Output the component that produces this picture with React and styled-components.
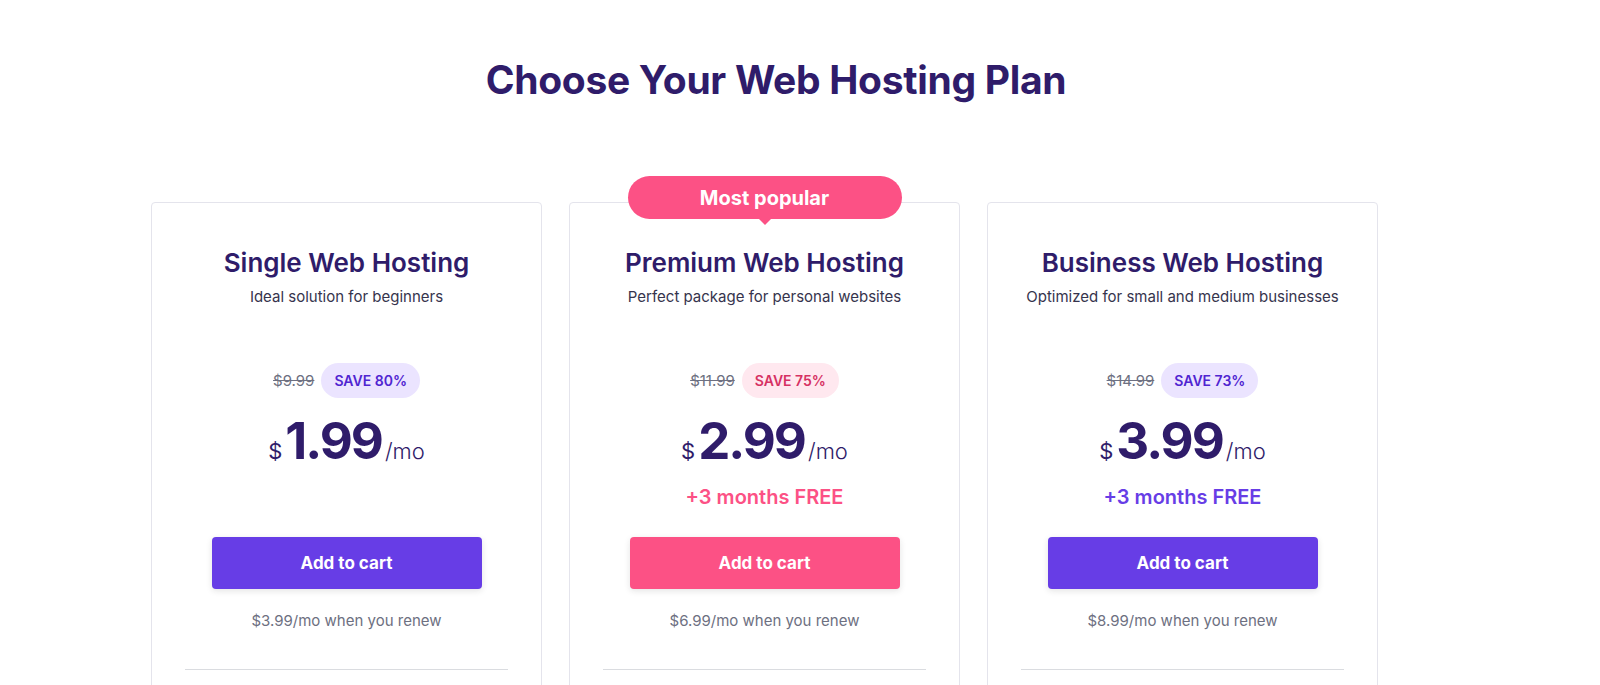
import React from "react";
import styled, { createGlobalStyle } from "styled-components";

const GlobalStyle = createGlobalStyle`
  html, body {
    margin: 0;
    padding: 0;
    background: #ffffff;
    font-family: "Inter", "Noto Sans", sans-serif;
    color: #2f1c6a;
  }
  body {
    height: 685px;
    overflow: hidden;
  }
`;

const plans = [
  {
    name: "Single Web Hosting",
    desc: "Ideal solution for beginners",
    old: "$9.99",
    save: "SAVE 80%",
    price: "1.99",
    renew: "$3.99/mo when you renew",
    accent: "purple",
  },
  {
    name: "Premium Web Hosting",
    desc: "Perfect package for personal websites",
    old: "$11.99",
    save: "SAVE 75%",
    price: "2.99",
    free: "+3 months FREE",
    renew: "$6.99/mo when you renew",
    accent: "pink",
    popular: true,
  },
  {
    name: "Business Web Hosting",
    desc: "Optimized for small and medium businesses",
    old: "$14.99",
    save: "SAVE 73%",
    price: "3.99",
    free: "+3 months FREE",
    renew: "$8.99/mo when you renew",
    accent: "purple",
  },
];

const colors = {
  purple: { main: "#673de6", soft: "#ebe4ff", text: "#5025d1" },
  pink: { main: "#fc5185", soft: "#ffe8ef", text: "#d63163" },
};

const App = () => {
  return (
    <>
      <GlobalStyle />
      <Wrapper>
        <Heading>Choose Your Web Hosting Plan</Heading>
        <Cards>
          {plans.map((p) => (
            <Card key={p.name}>
              {p.popular && <Ribbon>Most popular</Ribbon>}
              <PlanName>{p.name}</PlanName>
              <PlanDesc>{p.desc}</PlanDesc>
              <SaveRow>
                <OldPrice>{p.old}</OldPrice>
                <SaveBadge $accent={p.accent}>{p.save}</SaveBadge>
              </SaveRow>
              <PriceRow>
                <Currency>$</Currency>
                <Amount>{p.price}</Amount>
                <Period>/mo</Period>
              </PriceRow>
              <Free $accent={p.accent}>{p.free || ""}</Free>
              <CartButton $accent={p.accent}>Add to cart</CartButton>
              <Renew>{p.renew}</Renew>
              <Divider />
            </Card>
          ))}
        </Cards>
      </Wrapper>
    </>
  );
};

const Wrapper = styled.div`
  width: 1250px;
  margin-left: 151px;
  display: flex;
  flex-direction: column;
`;

const Heading = styled.h1`
  margin: 54px 0 0;
  text-align: center;
  font-size: 39px;
  line-height: 51px;
  font-weight: 700;
  letter-spacing: -0.3px;
  color: #2f1c6a;
`;

const Cards = styled.div`
  margin-top: 97px;
  display: grid;
  grid-template-columns: repeat(3, 391px);
  gap: 27px;
`;

const Card = styled.div`
  position: relative;
  box-sizing: border-box;
  height: 520px;
  border: 1px solid #e4e4ec;
  border-radius: 4px;
  display: flex;
  flex-direction: column;
  align-items: center;
  padding: 42px 33px 0;
`;

const Ribbon = styled.div`
  position: absolute;
  top: -27px;
  left: 50%;
  transform: translateX(-50%);
  width: 274px;
  height: 43px;
  border-radius: 22px;
  background: #fc5185;
  color: #ffffff;
  font-size: 20px;
  font-weight: 700;
  display: flex;
  align-items: center;
  justify-content: center;
  &::after {
    content: "";
    position: absolute;
    bottom: -6px;
    left: 50%;
    transform: translateX(-50%);
    border-left: 6px solid transparent;
    border-right: 6px solid transparent;
    border-top: 6px solid #fc5185;
  }
`;

const PlanName = styled.h2`
  margin: 0;
  font-size: 26px;
  line-height: 36px;
  font-weight: 600;
  color: #2f1c6a;
`;

const PlanDesc = styled.p`
  margin: 4px 0 0;
  font-size: 15px;
  line-height: 24px;
  color: #36344d;
`;

const SaveRow = styled.div`
  margin-top: 54px;
  display: flex;
  align-items: center;
  gap: 7px;
`;

const OldPrice = styled.span`
  font-size: 15px;
  color: #6d7081;
  text-decoration: line-through;
`;

const SaveBadge = styled.span`
  height: 35px;
  padding: 0 13px;
  border-radius: 18px;
  display: flex;
  align-items: center;
  font-size: 14px;
  font-weight: 600;
  background: ${(p) => colors[p.$accent].soft};
  color: ${(p) => colors[p.$accent].text};
`;

const PriceRow = styled.div`
  margin-top: 13px;
  display: flex;
  align-items: baseline;
  height: 60px;
`;

const Currency = styled.span`
  font-size: 22px;
  color: #2f1c6a;
  margin-right: 3px;
`;

const Amount = styled.span`
  font-size: 51px;
  line-height: 60px;
  font-weight: 700;
  letter-spacing: -2px;
  color: #2f1c6a;
`;

const Period = styled.span`
  font-size: 22px;
  font-weight: 300;
  color: #2f1c6a;
  margin-left: 3px;
`;

const Free = styled.div`
  margin-top: 12px;
  height: 28px;
  line-height: 28px;
  font-size: 20px;
  font-weight: 600;
  color: ${(p) => colors[p.$accent].main};
`;

const CartButton = styled.button`
  margin-top: 26px;
  width: 270px;
  height: 52px;
  border: none;
  border-radius: 4px;
  background: ${(p) => colors[p.$accent].main};
  color: #ffffff;
  font-family: inherit;
  font-size: 17px;
  font-weight: 700;
  box-shadow: 0 2px 6px rgba(29, 30, 32, 0.12);
  cursor: pointer;
`;

const Renew = styled.div`
  margin-top: 20px;
  font-size: 15px;
  line-height: 24px;
  color: #6d7081;
`;

const Divider = styled.div`
  margin-top: 36px;
  align-self: stretch;
  height: 1px;
  background: #dadce0;
`;

export default App;
